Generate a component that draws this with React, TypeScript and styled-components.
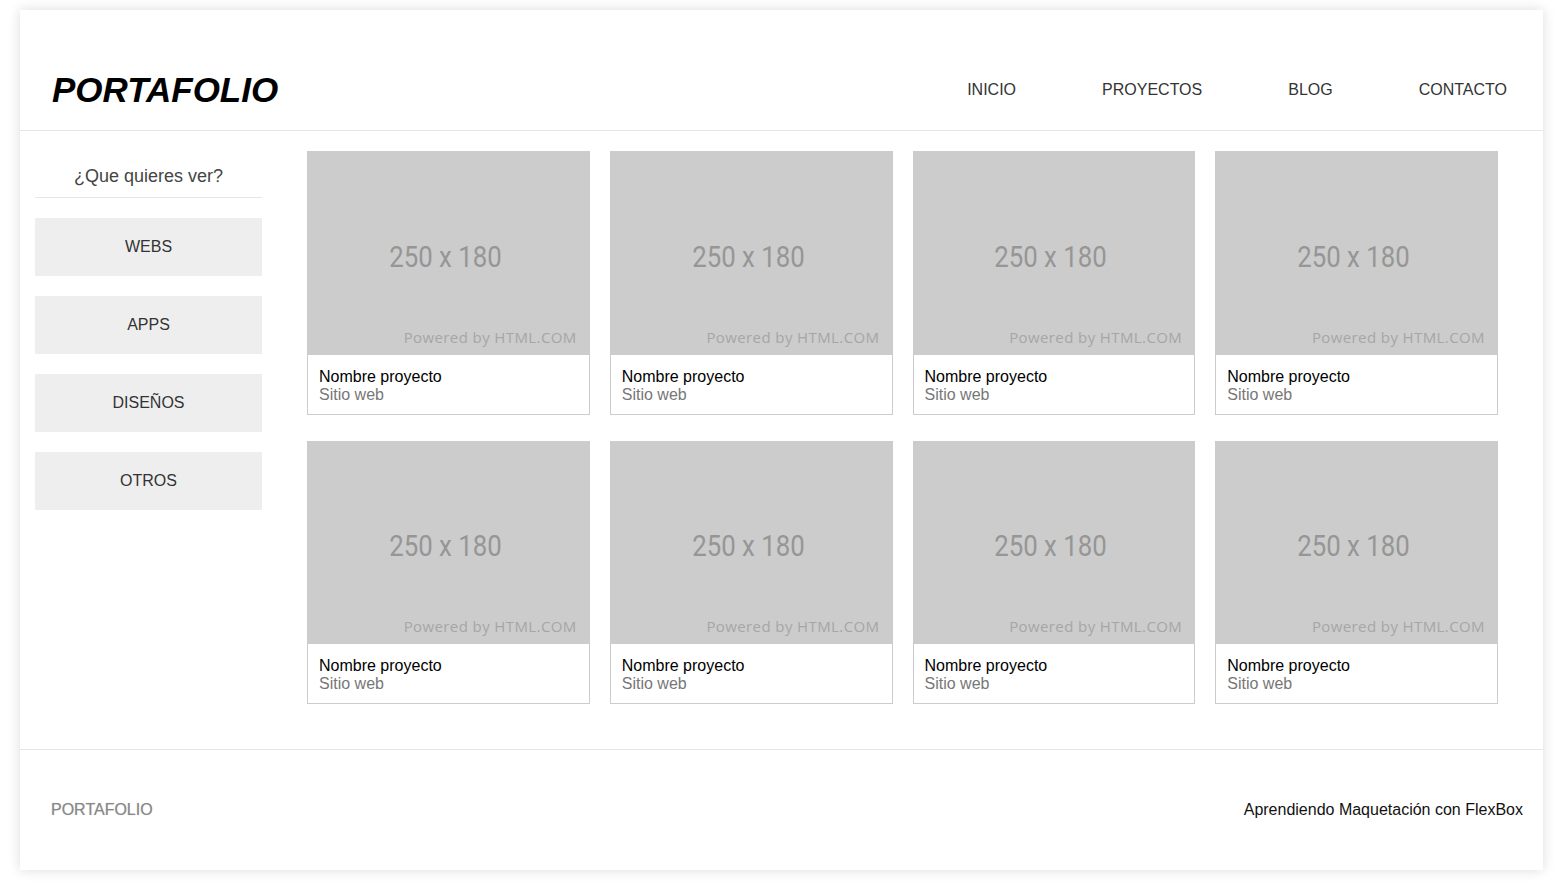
import React from "react";
import styled, { createGlobalStyle } from "styled-components";

const Global = createGlobalStyle`
  * { box-sizing: border-box; }
  body {
    margin: 0;
    background: #fff;
    font-family: "Liberation Sans", Arial, sans-serif;
  }
`;

const Page = styled.div`
  width: 1523px;
  height: 860px;
  margin: 10px 0 15px 20px;
  background: #fff;
  box-shadow: 0 0 12px rgba(0, 0, 0, 0.14);
  display: flex;
  flex-direction: column;
`;

const Header = styled.header`
  height: 121px;
  padding: 40px 36px 0 32px;
  border-bottom: 1px solid #e6e6e6;
  display: flex;
  align-items: center;
  justify-content: space-between;
`;

const Logo = styled.h1`
  margin: 0;
  font-size: 35px;
  font-weight: 700;
  font-style: italic;
  color: #000;
  line-height: 1;
`;

const Nav = styled.nav`
  display: flex;
  gap: 86px;
`;

const NavLink = styled.a`
  font-size: 16px;
  color: #333;
  text-decoration: none;
  text-transform: uppercase;
`;

const Main = styled.main`
  flex: 1;
  display: flex;
  padding: 20px 45px 45px 15px;
`;

const Sidebar = styled.aside`
  width: 227px;
  margin-right: 45px;
  display: flex;
  flex-direction: column;
  gap: 20px;
`;

const SideTitle = styled.h2`
  margin: 0;
  padding: 15px 0 10px;
  font-size: 18px;
  line-height: 21px;
  font-weight: 400;
  color: #444;
  text-align: center;
  border-bottom: 1px solid #e6e6e6;
`;

const FilterButton = styled.button`
  height: 58px;
  border: none;
  background: #eeeeee;
  font-family: "Liberation Sans", Arial, sans-serif;
  font-size: 16px;
  color: #333;
  cursor: pointer;
`;

const Grid = styled.section`
  flex: 1;
  display: grid;
  grid-template-columns: repeat(4, 1fr);
  column-gap: 20px;
  row-gap: 26px;
  align-content: start;
`;

const Card = styled.article`
  display: flex;
  flex-direction: column;
`;

const Placeholder = styled.div`
  position: relative;
  aspect-ratio: 250 / 180;
  background: #cccccc;
  display: flex;
  align-items: center;
  justify-content: center;
  padding-top: 7px;
`;

const Size = styled.span`
  font-family: Roboto, "Liberation Sans", sans-serif;
  font-size: 30px;
  color: #969696;
  transform: translateX(-3px) scaleX(0.86);
`;

const Powered = styled.span`
  position: absolute;
  right: 13px;
  bottom: 8px;
  font-family: "Open Sans", "DejaVu Sans", sans-serif;
  font-size: 15px;
  letter-spacing: 0.4px;
  color: #a6a6a6;
`;

const Caption = styled.div`
  padding: 13px 11px 10px;
  border: 1px solid #cccccc;
  border-top: none;
  font-size: 16px;
  line-height: 18px;
`;

const Title = styled.div`
  color: #000;
`;

const Kind = styled.div`
  color: #777;
`;

const Footer = styled.footer`
  height: 121px;
  border-top: 1px solid #e6e6e6;
  padding: 0 20px 0 31px;
  display: flex;
  align-items: center;
  justify-content: space-between;
  font-size: 16px;
`;

const FooterBrand = styled.span`
  color: #888;
  text-shadow: 0 0 1px rgba(0, 0, 0, 0.25);
`;

const FooterNote = styled.span`
  color: #111;
`;

const navItems = ["Inicio", "Proyectos", "Blog", "Contacto"];
const filters = ["WEBS", "APPS", "DISEÑOS", "OTROS"];
const projects = Array.from({ length: 8 }, (_, i) => ({
  id: i,
  name: "Nombre proyecto",
  kind: "Sitio web",
}));

export default function App() {
  return (
    <>
      <Global />
      <Page>
        <Header>
          <Logo>PORTAFOLIO</Logo>
          <Nav>
            {navItems.map((n) => (
              <NavLink key={n} href="#">
                {n}
              </NavLink>
            ))}
          </Nav>
        </Header>
        <Main>
          <Sidebar>
            <SideTitle>¿Que quieres ver?</SideTitle>
            {filters.map((f) => (
              <FilterButton key={f}>{f}</FilterButton>
            ))}
          </Sidebar>
          <Grid>
            {projects.map((p) => (
              <Card key={p.id}>
                <Placeholder>
                  <Size>250 x 180</Size>
                  <Powered>Powered by HTML.COM</Powered>
                </Placeholder>
                <Caption>
                  <Title>{p.name}</Title>
                  <Kind>{p.kind}</Kind>
                </Caption>
              </Card>
            ))}
          </Grid>
        </Main>
        <Footer>
          <FooterBrand>PORTAFOLIO</FooterBrand>
          <FooterNote>Aprendiendo Maquetación con FlexBox</FooterNote>
        </Footer>
      </Page>
    </>
  );
}
